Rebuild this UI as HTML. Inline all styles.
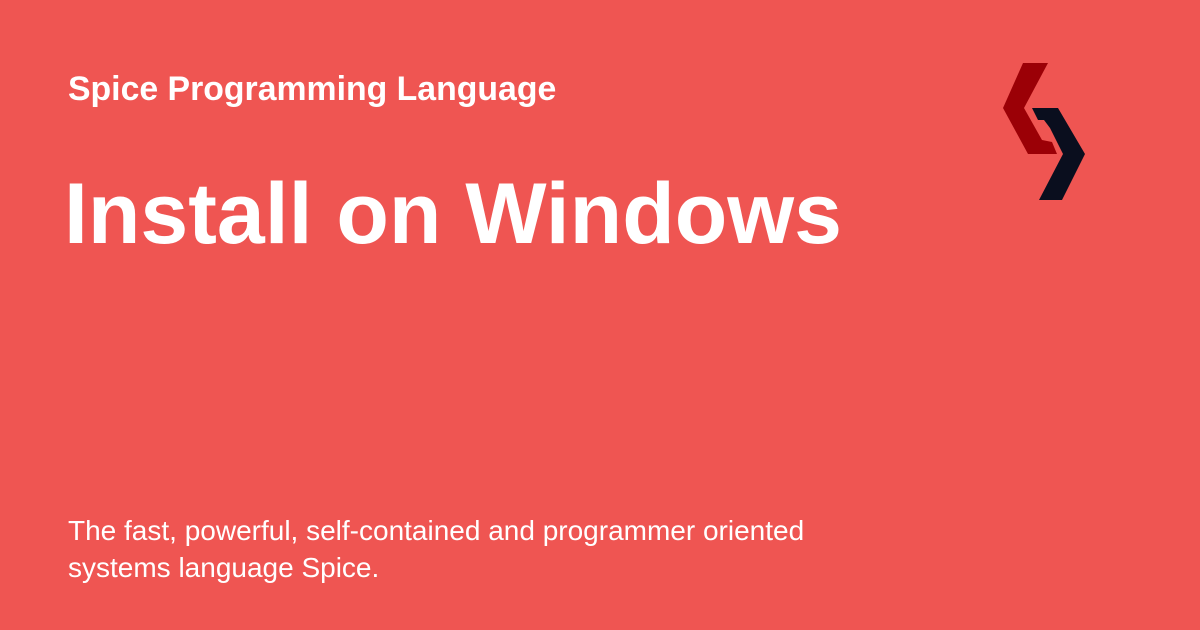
<!DOCTYPE html>
<html><head><style>
body{margin:0;width:1200px;height:630px;background:#ef5552;font-family:"Liberation Sans",sans-serif;color:#fff;position:relative;overflow:hidden}
.t{position:absolute;left:68px;top:70px;font-size:33.8px;font-weight:bold;line-height:38px}
.h{position:absolute;left:64px;top:164px;font-size:86px;font-weight:bold;line-height:100px}
.d{position:absolute;left:68px;top:512px;font-size:28px;line-height:37px}
</style></head><body>
<div class="t">Spice Programming Language</div>
<div class="h">Install on Windows</div>
<div class="d">The fast, powerful, self-contained and programmer oriented<br>systems language Spice.</div>
<svg style="position:absolute;left:0;top:0" width="1200" height="630">
<polygon fill="#9b0006" points="1023,63 1048,63 1024,108 1042,140 1052,142 1057,154 1028,154 1003,108"/>
<polygon fill="#0a0e1e" points="1032,108 1058,108 1085,154 1062,200 1039,200 1063,154 1050,128 1044,120 1038,120"/>
</svg>
</body></html>
